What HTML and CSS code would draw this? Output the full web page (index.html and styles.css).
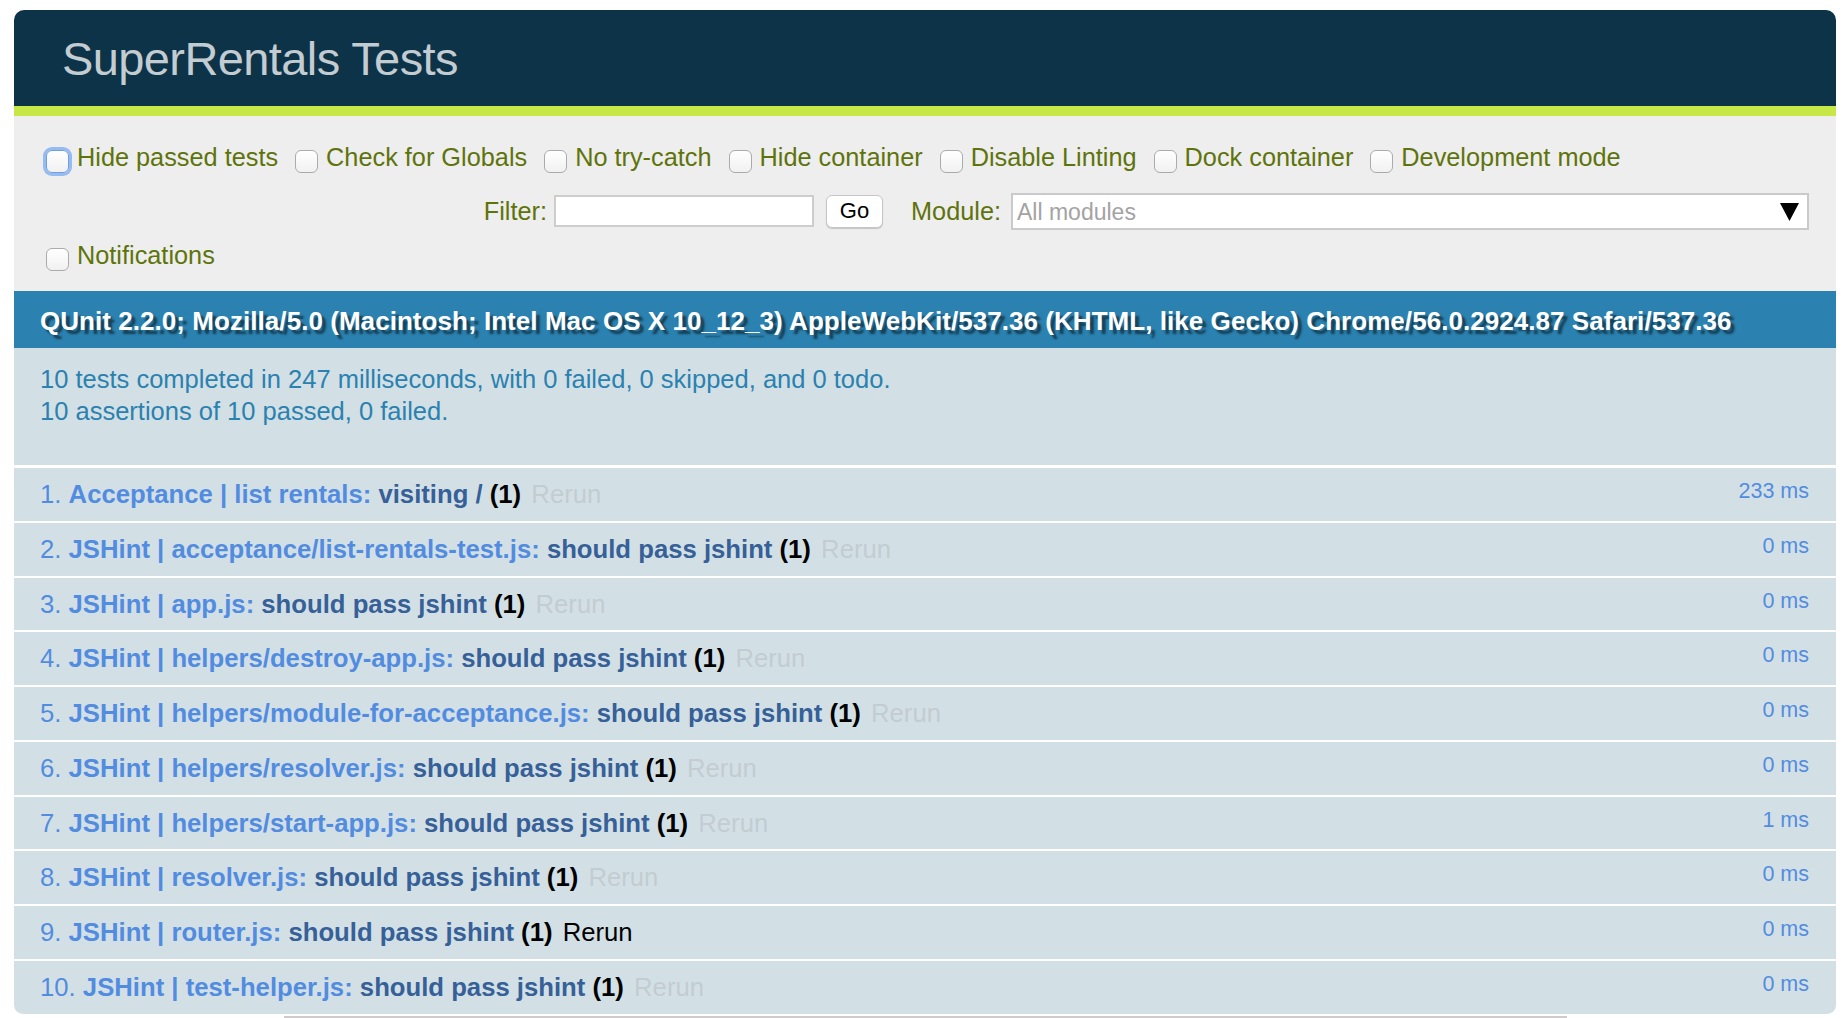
FILE: index.html
```html
<!DOCTYPE html>
<html lang="en">
<head>
<meta charset="utf-8">
<title>SuperRentals Tests</title>
<link rel="stylesheet" href="styles.css">
</head>
<body>
<div class="qunit">
  <h1 class="qunit-header">SuperRentals Tests</h1>
  <div class="qunit-banner"></div>
  <div class="toolbar">
    <div class="tb-row">
      <label class="opt"><input type="checkbox" class="cb focused"><span>Hide passed tests</span></label>
      <label class="opt"><input type="checkbox" class="cb"><span>Check for Globals</span></label>
      <label class="opt"><input type="checkbox" class="cb"><span>No try-catch</span></label>
      <label class="opt"><input type="checkbox" class="cb"><span>Hide container</span></label>
      <label class="opt"><input type="checkbox" class="cb"><span>Disable Linting</span></label>
      <label class="opt"><input type="checkbox" class="cb"><span>Dock container</span></label>
      <label class="opt"><input type="checkbox" class="cb"><span>Development mode</span></label>
    </div>
    <div class="tb-row tb-filters">
      <label class="flabel" for="filter">Filter:</label>
      <input id="filter" class="filter-input" type="text">
      <button class="go-btn" type="button">Go</button>
      <span class="mlabel">Module:</span>
      <div class="module-select">
        <span class="ms-text">All modules</span>
        <svg class="ms-arrow" width="19" height="18" viewBox="0 0 19 18"><polygon points="0,0 19,0 9.5,18" fill="#000"/></svg>
      </div>
    </div>
    <div class="tb-row tb-last">
      <label class="opt"><input type="checkbox" class="cb"><span>Notifications</span></label>
    </div>
  </div>
  <h2 class="user-agent">QUnit 2.2.0; Mozilla/5.0 (Macintosh; Intel Mac OS X 10_12_3) AppleWebKit/537.36 (KHTML, like Gecko) Chrome/56.0.2924.87 Safari/537.36</h2>
  <p class="testresult">10 tests completed in 247 milliseconds, with 0 failed, 0 skipped, and 0 todo.<br>10 assertions of 10 passed, 0 failed.</p>
  <ol class="tests">
    <li class="test"><span class="main"><span class="num">1.</span> <strong><span class="module-name">Acceptance | list rentals</span>: <span class="test-name">visiting /</span></strong> <b class="counts">(1)</b> <a class="rerun">Rerun</a></span><span class="runtime">233 ms</span></li>
    <li class="test"><span class="main"><span class="num">2.</span> <strong><span class="module-name">JSHint | acceptance/list-rentals-test.js</span>: <span class="test-name">should pass jshint</span></strong> <b class="counts">(1)</b> <a class="rerun">Rerun</a></span><span class="runtime">0 ms</span></li>
    <li class="test"><span class="main"><span class="num">3.</span> <strong><span class="module-name">JSHint | app.js</span>: <span class="test-name">should pass jshint</span></strong> <b class="counts">(1)</b> <a class="rerun">Rerun</a></span><span class="runtime">0 ms</span></li>
    <li class="test"><span class="main"><span class="num">4.</span> <strong><span class="module-name">JSHint | helpers/destroy-app.js</span>: <span class="test-name">should pass jshint</span></strong> <b class="counts">(1)</b> <a class="rerun">Rerun</a></span><span class="runtime">0 ms</span></li>
    <li class="test"><span class="main"><span class="num">5.</span> <strong><span class="module-name">JSHint | helpers/module-for-acceptance.js</span>: <span class="test-name">should pass jshint</span></strong> <b class="counts">(1)</b> <a class="rerun">Rerun</a></span><span class="runtime">0 ms</span></li>
    <li class="test"><span class="main"><span class="num">6.</span> <strong><span class="module-name">JSHint | helpers/resolver.js</span>: <span class="test-name">should pass jshint</span></strong> <b class="counts">(1)</b> <a class="rerun">Rerun</a></span><span class="runtime">0 ms</span></li>
    <li class="test"><span class="main"><span class="num">7.</span> <strong><span class="module-name">JSHint | helpers/start-app.js</span>: <span class="test-name">should pass jshint</span></strong> <b class="counts">(1)</b> <a class="rerun">Rerun</a></span><span class="runtime">1 ms</span></li>
    <li class="test"><span class="main"><span class="num">8.</span> <strong><span class="module-name">JSHint | resolver.js</span>: <span class="test-name">should pass jshint</span></strong> <b class="counts">(1)</b> <a class="rerun">Rerun</a></span><span class="runtime">0 ms</span></li>
    <li class="test"><span class="main"><span class="num">9.</span> <strong><span class="module-name">JSHint | router.js</span>: <span class="test-name">should pass jshint</span></strong> <b class="counts">(1)</b> <a class="rerun hover">Rerun</a></span><span class="runtime">0 ms</span></li>
    <li class="test"><span class="main"><span class="num">10.</span> <strong><span class="module-name">JSHint | test-helper.js</span>: <span class="test-name">should pass jshint</span></strong> <b class="counts">(1)</b> <a class="rerun">Rerun</a></span><span class="runtime">0 ms</span></li>
  </ol>
  <div class="testing-container"></div>
</div>
</body>
</html>
```
FILE: styles.css
```css
html, body {
  background: #fff;
}
body {
  margin: 10px 8px 0 14px;
  font-family: "Liberation Sans", Arial, Helvetica, sans-serif;
}
.qunit-header {
  margin: 0;
  padding: 25px 0 23px 48px;
  height: 48px;
  font-size: 47px;
  line-height: 48px;
  letter-spacing: -0.6px;
  font-weight: normal;
  color: #C2CCD1;
  background: #0D3349;
  border-radius: 10px 10px 0 0;
}
.qunit-banner {
  height: 10px;
  background: #C6E746;
}
.toolbar {
  background: #EEE;
  color: #5E740B;
  font-size: 25.3px;
  padding: 23px 27px 18px 26px;
}
.tb-row {
  display: flex;
  align-items: center;
  height: 36px;
}
.tb-filters {
  justify-content: flex-end;
  margin-top: 18px;
}
.tb-last {
  margin-top: 8px;
}
.opt {
  display: inline-flex;
  align-items: center;
  line-height: 30px;
  margin-right: 11px;
}
.cb {
  appearance: none;
  -webkit-appearance: none;
  width: 23px;
  height: 23px;
  margin: 9px 8px 0 6px;
  border: 1px solid #ababab;
  border-radius: 6px;
  background: linear-gradient(#ffffff, #f1f1f1);
  box-sizing: border-box;
  flex: none;
}
.cb.focused {
  border-color: #6f9fe0;
  box-shadow: 0 0 0 3px rgba(120, 170, 240, 0.75);
}
.flabel {
  margin-right: 7px;
}
.filter-input {
  width: 260px;
  height: 32px;
  box-sizing: border-box;
  border: 2px solid #cdcdcd;
  background: #fff;
  margin: 0;
  padding: 0 4px;
}
.go-btn {
  width: 57px;
  height: 33px;
  margin: 0 28px 0 12px;
  padding: 0;
  border: 1px solid #c6c6c6;
  border-radius: 6px;
  background: #fff;
  box-shadow: 0 1px 1px rgba(0, 0, 0, 0.18);
  font-family: "Liberation Sans", Arial, sans-serif;
  font-size: 22px;
  color: #000;
}
.mlabel {
  margin-right: 10px;
}
.module-select {
  width: 798px;
  height: 37px;
  box-sizing: border-box;
  border: 2px solid #cacaca;
  background: #fff;
  display: flex;
  align-items: center;
  padding: 0 8px 0 4px;
}
.ms-text {
  color: #a3a3a3;
  font-size: 23px;
  margin-top: 2px;
}
.ms-arrow {
  margin-left: auto;
  margin-top: 1px;
}
.user-agent {
  margin: 0;
  padding: 14px 26px 11px;
  line-height: 32px;
  font-size: 26px;
  letter-spacing: 0.05px;
  font-weight: bold;
  color: #fff;
  background: #2B81AF;
  text-shadow: rgba(0, 0, 0, 0.5) 4px 4px 2px;
  white-space: nowrap;
  overflow: hidden;
}
.testresult {
  margin: 0;
  padding: 15px 26px 38px;
  font-size: 25.5px;
  line-height: 32px;
  color: #2B81AF;
  background: #D2E0E6;
  border-bottom: 3px solid #fff;
}
.tests {
  margin: 0;
  padding: 0;
  list-style: none;
  font-size: 25.7px;
}
.test {
  display: flex;
  align-items: flex-start;
  padding: 10px 27px 10px 26px;
  background: #D2E0E6;
  color: #528CE0;
  border-bottom: 2px solid #fff;
}
.test:last-child {
  border-radius: 0 0 10px 10px;
}
.main {
  line-height: 32.75px;
  white-space: nowrap;
}
.num {
  font-weight: normal;
}
.module-name {
  color: #528CE0;
}
.test-name {
  color: #366097;
}
.counts {
  color: #000;
}
.rerun {
  color: #C2CCD1;
  padding-left: 3px;
  text-decoration: none;
}
.rerun.hover {
  color: #000;
}
.runtime {
  margin-left: auto;
  font-size: 21.5px;
  line-height: 26px;
  color: #528CE0;
}
.testing-container {
  width: 1279px;
  height: 768px;
  margin: 0 auto;
  border: 2px solid #ccc;
  background: #fff;
}
```
